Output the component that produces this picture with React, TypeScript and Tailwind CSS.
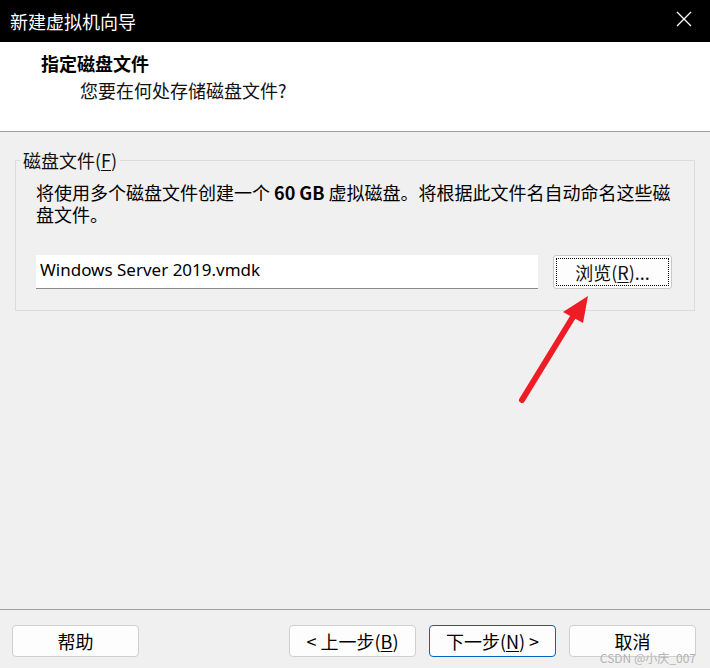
import React from 'react'

const cjk = "font-['Microsoft_YaHei','Noto_Sans_CJK_SC',sans-serif]"

function Btn({ children, primary, className = '' }: { children: React.ReactNode; primary?: boolean; className?: string }) {
  return (
    <button
      className={`h-[32px] w-[127px] rounded-[4px] bg-[#fdfdfd] text-[18px] leading-none text-black ${
        primary ? 'border border-[#0067c0]' : 'border border-[#d0d0d0]'
      } ${className}`}
    >
      {children}
    </button>
  )
}

export default function App() {
  return (
    <div className={`relative w-[710px] h-[668px] flex flex-col bg-[#f0f0f0] overflow-hidden ${cjk}`}>
      {/* title bar */}
      <div className="h-[42px] bg-black flex items-center justify-between pl-[10px] pr-[18px]">
        <span className="text-white text-[18px] leading-none">新建虚拟机向导</span>
        <svg width="16" height="16" viewBox="0 0 16 16" className="mt-[-4px]">
          <path d="M1 1 L15 15 M15 1 L1 15" stroke="white" strokeWidth="1.3" />
        </svg>
      </div>

      {/* header */}
      <div className="h-[90px] bg-white border-b border-[#a0a0a0] pt-[9px]">
        <p className="pl-[41px] text-[18px] leading-[24px] font-bold text-black">指定磁盘文件</p>
        <p className="pl-[80px] mt-[3px] text-[18px] leading-[24px] text-[#111]">您要在何处存储磁盘文件?</p>
      </div>

      {/* body */}
      <div className="flex-1">
        <fieldset className="mt-[16px] mx-[15px] border border-[#dcdcdc] pl-[4px] pr-[21px] pb-[21px]">
          <legend className="px-[3px] text-[18px] leading-[24px] text-[#111]">
            磁盘文件(<span className="underline underline-offset-2">F</span>)
          </legend>
          <div className="pl-[16px]">
            <p className="mt-[9px] text-[18px] leading-[22px] text-black">
              将使用多个磁盘文件创建一个 <span className="font-bold">60 GB</span> 虚拟磁盘。将根据此文件名自动命名这些磁
              <br />
              盘文件。
            </p>
            <div className="mt-[30px] flex items-center">
              <div className="w-[502px] h-[34px] bg-white border-b border-[#8a8a8a] flex items-center pl-[4px] pb-[4px]">
                <span className="font-['Segoe_UI','Noto_Sans',sans-serif] text-[17px] text-black">Windows Server 2019.vmdk</span>
              </div>
              <button className="ml-[15px] w-[119px] h-[34px] rounded-[3px] border border-[#c8c8c8] bg-[#fdfdfd] p-[2px]">
                <span className="flex h-full w-full items-center justify-center border border-dotted border-black text-[18px] leading-none text-[#111]">
                  浏览(<span className="underline underline-offset-2">R</span>)...
                </span>
              </button>
            </div>
          </div>
        </fieldset>
      </div>

      {/* footer */}
      <div className="h-[59px] border-t border-[#a0a0a0] flex items-start justify-between pt-[15px] pl-[12px] pr-[14px]">
        <Btn>帮助</Btn>
        <div className="flex gap-[13px]">
          <Btn>&lt; 上一步(<span className="underline underline-offset-2">B</span>)</Btn>
          <Btn primary>下一步(<span className="underline underline-offset-2">N</span>) &gt;</Btn>
          <Btn>取消</Btn>
        </div>
      </div>

      {/* annotation arrow */}
      <svg className="absolute left-0 top-0 pointer-events-none" width="710" height="668">
        <line x1="522" y1="400" x2="576" y2="312" stroke="#ee1c25" strokeWidth="6" strokeLinecap="round" />
        <polygon points="588,296 563,312 583,323" fill="#ee1c25" />
      </svg>

      {/* watermark */}
      <span className="absolute right-[14px] bottom-[4px] text-[12px] leading-none text-[#b4b4b4] font-['Noto_Sans_CJK_SC',sans-serif]">
        CSDN @小庆_007
      </span>
    </div>
  )
}
